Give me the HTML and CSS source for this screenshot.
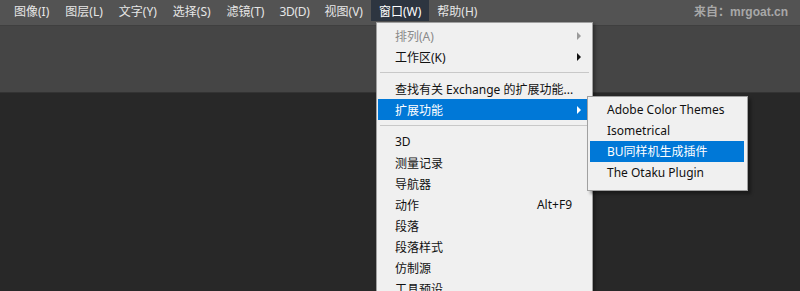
FILE: index.html
```html
<!DOCTYPE html>
<html lang="zh-CN">
<head>
<meta charset="utf-8">
<link rel="stylesheet" href="styles.css">
</head>
<body>
<div class="app">
  <header class="menubar">
    <nav class="menus">
      <span class="mi">图像(I)</span>
      <span class="mi">图层(L)</span>
      <span class="mi">文字(Y)</span>
      <span class="mi">选择(S)</span>
      <span class="mi">滤镜(T)</span>
      <span class="mi tight">3D(D)</span>
      <span class="mi">视图(V)</span>
      <span class="mi active">窗口(W)</span>
      <span class="mi">帮助(H)</span>
    </nav>
    <span class="source">来自：mrgoat.cn</span>
  </header>
  <div class="optionsbar"></div>
  <div class="workspace"></div>

  <div class="dropdown">
    <div class="row disabled"><span>排列(A)</span><span class="arrow"></span></div>
    <div class="row"><span>工作区(K)</span><span class="arrow"></span></div>
    <div class="sep"></div>
    <div class="row"><span>查找有关 Exchange 的扩展功能...</span></div>
    <div class="row hl"><span>扩展功能</span><span class="arrow"></span></div>
    <div class="sep"></div>
    <div class="row"><span>3D</span></div>
    <div class="row"><span>测量记录</span></div>
    <div class="row"><span>导航器</span></div>
    <div class="row"><span>动作</span><span class="key">Alt+F9</span></div>
    <div class="row"><span>段落</span></div>
    <div class="row"><span>段落样式</span></div>
    <div class="row"><span>仿制源</span></div>
    <div class="row"><span>工具预设</span></div>
  </div>

  <div class="submenu">
    <div class="srow">Adobe Color Themes</div>
    <div class="srow">Isometrical</div>
    <div class="srow hl">BU同样机生成插件</div>
    <div class="srow">The Otaku Plugin</div>
  </div>
</div>
</body>
</html>
```

FILE: styles.css
```css
* { box-sizing: border-box; }
html, body { margin: 0; padding: 0; }
body {
  background: #282828;
  font-family: "Noto Sans", "Noto Sans CJK SC", sans-serif;
  font-size: 12px;
  overflow: hidden;
}
.app {
  position: relative;
  width: 800px;
  height: 291px;
  display: flex;
  flex-direction: column;
}
.menubar {
  height: 26px;
  background: #535353;
  border-bottom: 1px solid #3f3f3f;
  display: flex;
  align-items: flex-start;
  justify-content: space-between;
  padding: 0 12px 0 6px;
}
.menus { display: flex; }
.mi {
  color: #e6e6e6;
  height: 21px;
  line-height: 23px;
  padding: 0 8px;
  white-space: nowrap;
}
.mi.tight { padding: 0 7px 0 7px; letter-spacing: -0.3px; }
.mi.active { background: #2d3540; color: #ffffff; }
.source {
  color: #a8a8a8;
  font-family: "Liberation Sans", "Noto Sans CJK SC", sans-serif;
  font-weight: bold;
  line-height: 25px;
  font-size: 12px;
}
.optionsbar {
  height: 67px;
  background: #454545;
  border-bottom: 1px solid #333;
}
.workspace { flex: 1; background: #282828; }

.dropdown {
  position: absolute;
  left: 376px;
  top: 22px;
  width: 217px;
  height: 290px;
  background: #f0f0f0;
  border: 1px solid #a0a0a0;
  padding: 2px 1px 0 1px;
  box-shadow: 2px 2px 3px rgba(0,0,0,0.35);
}
.row {
  height: 21px;
  display: flex;
  align-items: center;
  justify-content: space-between;
  padding: 0 10px 0 17px;
  color: #111;
  white-space: nowrap;
}
.row.disabled { color: #8a8a8a; }
.row.hl { background: #0078d7; color: #fff; }
.arrow {
  width: 0; height: 0;
  border-top: 4px solid transparent;
  border-bottom: 4px solid transparent;
  border-left: 4px solid #111;
}
.row.disabled .arrow { border-left-color: #9a9a9a; }
.row.hl .arrow { border-left-color: #fff; }
.key { padding-right: 9px; }
.sep {
  height: 1px;
  background: #c8c8c8;
  margin: 5px 2px;
}

.submenu {
  position: absolute;
  left: 587px;
  top: 96px;
  width: 161px;
  background: #f0f0f0;
  border: 1px solid #a0a0a0;
  padding: 2px 3px 7px 2px;
  box-shadow: 3px 3px 3px rgba(0,0,0,0.35);
}
.srow {
  height: 21px;
  line-height: 21px;
  padding-left: 17px;
  color: #111;
  white-space: nowrap;
}
.srow.hl { background: #0078d7; color: #fff; }
```
